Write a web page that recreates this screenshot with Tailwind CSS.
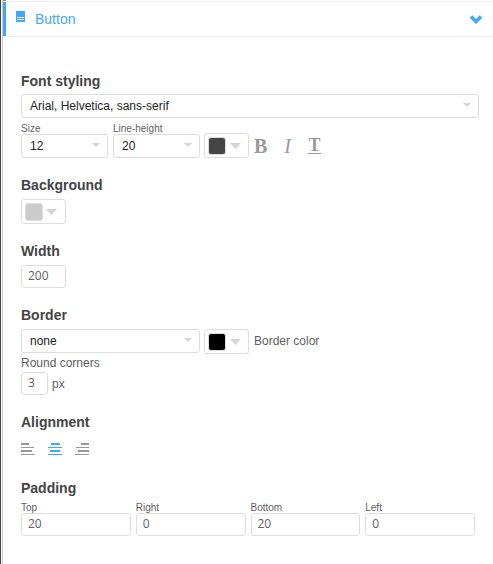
<!DOCTYPE html>
<html lang="en">
<head>
    <meta charset="UTF-8">
    <meta name="viewport" content="width=device-width, initial-scale=1.0">
    <title>Button settings</title>
    <script src="https://cdn.jsdelivr.net/npm/@tailwindcss/browser@4"></script>
</head>
<body class="bg-white border-l border-[#444] pl-px min-h-screen flex font-['Liberation_Sans',Arial,sans-serif] text-xs text-[#5f5f5f]">
    <main class="flex-1 border-l border-[#ccc]">
        <div class="h-px w-[3px] bg-[#888]"></div>

        <!-- Panel header -->
        <header class="border-y border-[#eee]">
            <button type="button" class="w-full h-[34px] flex items-center border-l-3 border-[#3fa9f5] pl-2.5 pr-[11px] text-sm text-[#3fa9f5]">
                <svg class="w-[9px] h-[11px] mr-2.5 mb-[5px]" viewBox="0 0 9 11" fill="none">
                    <path d="M0 0h9v11H0z" fill="#3fa9f5"/>
                    <path d="M1 6.5h7M1 8.5h7" stroke="#fff"/>
                </svg>
                Button
                <svg class="w-3 h-[9px] ml-auto" viewBox="0 0 12 9" fill="none" stroke="#3fa9f5" stroke-width="3.6">
                    <path d="M1 1.5l5 5 5-5"/>
                </svg>
            </button>
        </header>

        <form class="pt-[33px] pl-[18px] pr-3.5 pb-7 flex flex-col gap-[17px]">
            <!-- Font styling -->
            <section>
                <h2 class="text-sm leading-5 font-bold text-[#444] pt-px mb-[3px]">Font styling</h2>
                <div class="relative">
                    <select aria-label="Font family" class="block w-full h-6 appearance-none border border-[#ddd] rounded-[3px] bg-white pl-2 text-[#222]">
                        <option>Arial, Helvetica, sans-serif</option>
                    </select>
                    <svg class="absolute right-2 top-[9px] w-2 h-1 pointer-events-none" viewBox="0 0 8 4" fill="#d4d4d4"><path d="M0 0h8L4 4z"/></svg>
                </div>
                <div class="flex items-end mt-[5px]">
                    <div class="w-[87px] mr-[5px]">
                        <label for="size" class="block text-[10px] leading-[11px]">Size</label>
                        <div class="relative">
                            <select id="size" class="block w-full h-6 appearance-none border border-[#ddd] rounded-[3px] bg-white pl-2 text-[#222]">
                                <option>12</option>
                            </select>
                            <svg class="absolute right-2 top-[9px] w-2 h-1 pointer-events-none" viewBox="0 0 8 4" fill="#d4d4d4"><path d="M0 0h8L4 4z"/></svg>
                        </div>
                    </div>
                    <div class="w-[87px] mr-1">
                        <label for="line-height" class="block text-[10px] leading-[11px]">Line-height</label>
                        <div class="relative">
                            <select id="line-height" class="block w-full h-6 appearance-none border border-[#ddd] rounded-[3px] bg-white pl-2 text-[#222]">
                                <option>20</option>
                            </select>
                            <svg class="absolute right-2 top-[9px] w-2 h-1 pointer-events-none" viewBox="0 0 8 4" fill="#d4d4d4"><path d="M0 0h8L4 4z"/></svg>
                        </div>
                    </div>
                    <button type="button" aria-label="Font color" class="w-[45px] h-[25px] flex items-center gap-1 border border-[#ddd] rounded-[3px] pl-[3px]">
                        <span class="w-[18px] h-[18px] rounded-[3px] border border-[#ddd] bg-[#444]"></span>
                        <svg class="w-[11px] h-1.5" viewBox="0 0 11 6" fill="#d4d4d4"><path d="M0 0h11L5.5 6z"/></svg>
                    </button>
                    <div class="flex items-center h-6 ml-[5px] gap-3.5 font-['Liberation_Serif',serif] text-xl leading-6 text-[#999]">
                        <button type="button" aria-label="Bold" class="w-[13px] font-bold">B</button>
                        <button type="button" aria-label="Italic" class="w-[13px] italic">I</button>
                        <button type="button" aria-label="Underline" class="w-[13px] text-lg leading-[15px] font-bold border-b border-[#999]">T</button>
                    </div>
                </div>
            </section>

            <!-- Background -->
            <section>
                <h2 class="text-sm leading-5 font-bold text-[#444] mb-1">Background</h2>
                <button type="button" aria-label="Background color" class="w-[45px] h-[25px] flex items-center gap-[3px] border border-[#ddd] rounded-[3px] pl-[3px]">
                    <span class="w-[18px] h-[18px] rounded-[3px] border border-[#ddd] bg-[#ccc]"></span>
                    <svg class="w-[11px] h-1.5" viewBox="0 0 11 6" fill="#d4d4d4"><path d="M0 0h11L5.5 6z"/></svg>
                </button>
            </section>

            <!-- Width -->
            <section>
                <h2 class="text-sm leading-5 font-bold text-[#444] mb-1"><label for="width">Width</label></h2>
                <input id="width" type="text" value="200" class="block w-[45px] h-[23px] border border-[#ddd] rounded-[3px] px-1.5 pb-0.5 font-['Open_Sans',sans-serif]">
            </section>

            <!-- Border -->
            <section>
                <h2 class="text-sm leading-5 font-bold text-[#444] mb-1">Border</h2>
                <div class="flex items-start">
                    <div class="relative w-[179px] mr-1">
                        <select aria-label="Border style" class="block w-full h-6 appearance-none border border-[#ddd] rounded-[3px] bg-white pl-2 text-[#222]">
                            <option>none</option>
                        </select>
                        <svg class="absolute right-2 top-[9px] w-2 h-1 pointer-events-none" viewBox="0 0 8 4" fill="#d4d4d4"><path d="M0 0h8L4 4z"/></svg>
                    </div>
                    <button type="button" id="border-color" class="w-[45px] h-[25px] flex items-center gap-1 border border-[#ddd] rounded-[3px] pl-[3px]">
                        <span class="w-[18px] h-[18px] rounded-[3px] border border-[#ddd] bg-black"></span>
                        <svg class="w-[11px] h-1.5" viewBox="0 0 11 6" fill="#d4d4d4"><path d="M0 0h11L5.5 6z"/></svg>
                    </button>
                    <label for="border-color" class="ml-[5px] leading-6">Border color</label>
                </div>
                <label for="round-corners" class="block leading-[18px]">Round corners</label>
                <div class="flex items-center gap-1">
                    <input id="round-corners" type="text" value="3" class="block w-[27px] h-[23px] border border-[#ddd] rounded-[3px] px-1.5 pb-0.5 font-['Open_Sans',sans-serif]">
                    <span>px</span>
                </div>
            </section>

            <!-- Alignment -->
            <section>
                <h2 class="text-sm leading-5 font-bold text-[#444] mb-1">Alignment</h2>
                <div class="flex items-center h-[25px] gap-[13px]">
                    <button type="button" aria-label="Align left">
                        <svg class="w-3.5 h-3" viewBox="0 0 14 12" fill="#999"><path d="M0 0h8v2H0zM0 4h13v1H0zM0 7h11v2H0zM0 11h14v1H0z"/></svg>
                    </button>
                    <button type="button" aria-label="Align center">
                        <svg class="w-3.5 h-3" viewBox="0 0 14 12" fill="#3fa9f5"><path d="M3 0h9v2H3zM0 4h14v1H0zM2 7h10v2H2zM0 11h14v1H0z"/></svg>
                    </button>
                    <button type="button" aria-label="Align right">
                        <svg class="w-3.5 h-3" viewBox="0 0 14 12" fill="#999"><path d="M6 0h8v2H6zM1 4h13v1H1zM3 7h11v2H3zM0 11h14v1H0z"/></svg>
                    </button>
                </div>
            </section>

            <!-- Padding -->
            <section>
                <h2 class="text-sm leading-5 font-bold text-[#444] mb-1">Padding</h2>
                <div class="grid grid-cols-4 gap-[5px] pr-1">
                    <div>
                        <label for="pad-top" class="block text-[10px] leading-[11px]">Top</label>
                        <input id="pad-top" type="text" value="20" class="block w-full h-[23px] border border-[#ddd] rounded-[3px] px-1.5 pb-0.5 font-['Open_Sans',sans-serif]">
                    </div>
                    <div>
                        <label for="pad-right" class="block text-[10px] leading-[11px]">Right</label>
                        <input id="pad-right" type="text" value="0" class="block w-full h-[23px] border border-[#ddd] rounded-[3px] px-1.5 pb-0.5 font-['Open_Sans',sans-serif]">
                    </div>
                    <div>
                        <label for="pad-bottom" class="block text-[10px] leading-[11px]">Bottom</label>
                        <input id="pad-bottom" type="text" value="20" class="block w-full h-[23px] border border-[#ddd] rounded-[3px] px-1.5 pb-0.5 font-['Open_Sans',sans-serif]">
                    </div>
                    <div>
                        <label for="pad-left" class="block text-[10px] leading-[11px]">Left</label>
                        <input id="pad-left" type="text" value="0" class="block w-full h-[23px] border border-[#ddd] rounded-[3px] px-1.5 pb-0.5 font-['Open_Sans',sans-serif]">
                    </div>
                </div>
            </section>
        </form>
    </main>
</body>
</html>
